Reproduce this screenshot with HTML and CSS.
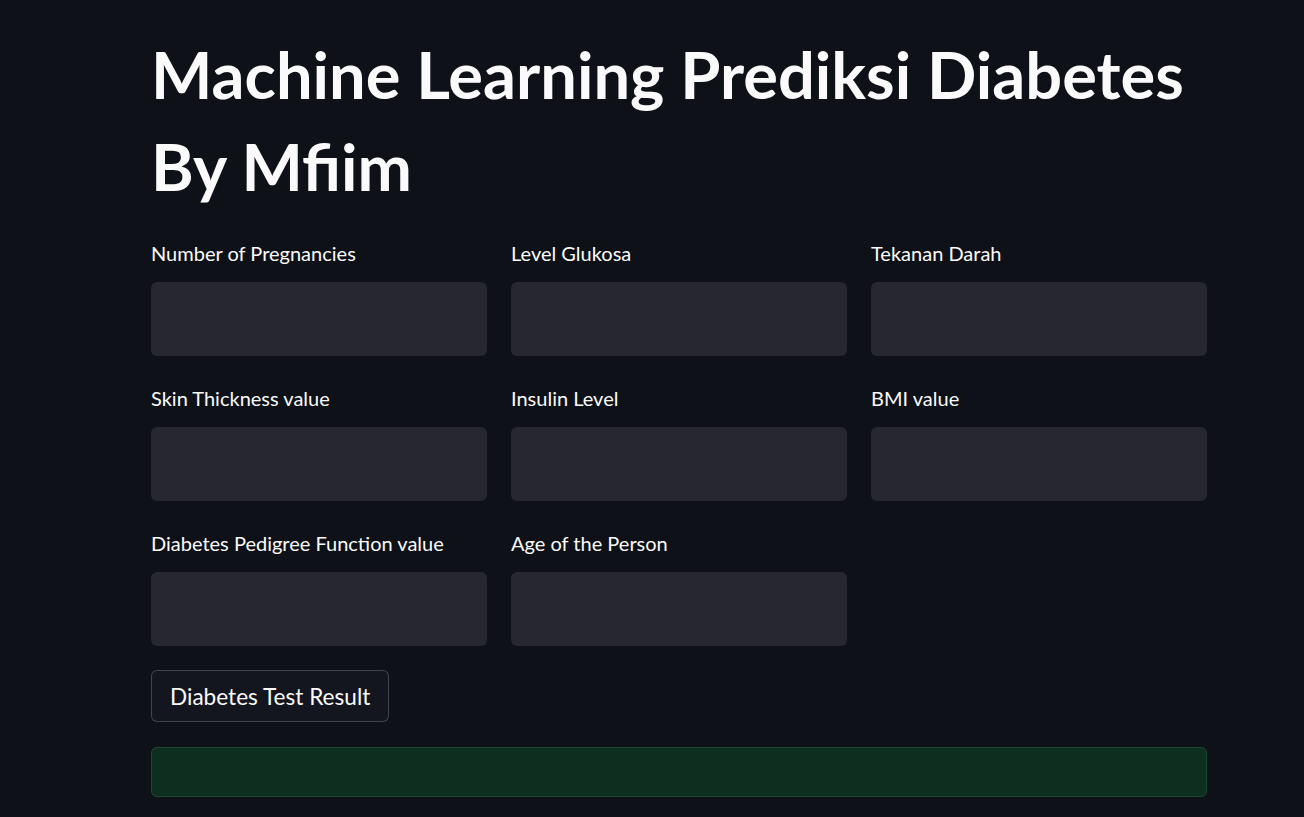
FILE: index.html
```html
<!DOCTYPE html>
<html>
<head>
<meta charset="utf-8">
<link rel="stylesheet" href="styles.css">
</head>
<body>
<main class="main">
  <h1 class="title">Machine Learning Prediksi Diabetes By Mfiim</h1>
  <div class="form-grid">
    <div class="field"><label class="label">Number of Pregnancies</label><div class="input"></div></div>
    <div class="field"><label class="label">Level Glukosa</label><div class="input"></div></div>
    <div class="field"><label class="label">Tekanan Darah</label><div class="input"></div></div>
    <div class="field"><label class="label">Skin Thickness value</label><div class="input"></div></div>
    <div class="field"><label class="label">Insulin Level</label><div class="input"></div></div>
    <div class="field"><label class="label">BMI value</label><div class="input"></div></div>
    <div class="field"><label class="label">Diabetes Pedigree Function value</label><div class="input"></div></div>
    <div class="field"><label class="label">Age of the Person</label><div class="input"></div></div>
  </div>
  <button class="btn">Diabetes Test Result</button>
  <div class="success"></div>
</main>
</body>
</html>
```
FILE: styles.css
```css
html, body {
  margin: 0;
  padding: 0;
  background: #0e1117;
  color: #fafafa;
  font-family: "Source Sans Pro", Lato, "Noto Sans", sans-serif;
}
.main {
  width: 1056px;
  padding: 28px 0 0 151px;
}
.title {
  margin: 0;
  font-size: 65px;
  font-weight: 700;
  line-height: 92px;
  letter-spacing: 0;
  width: 1100px;
}
.form-grid {
  margin-top: 27px;
  display: grid;
  grid-template-columns: repeat(3, 336px);
  column-gap: 24px;
  row-gap: 28px;
}
.field {
  display: flex;
  flex-direction: column;
}
.label {
  font-size: 20px;
  line-height: 28px;
  height: 28px;
  margin-bottom: 15px;
  color: #fafafa;
}
.input {
  height: 74px;
  background: #262730;
  border-radius: 6px;
}
.btn {
  margin-top: 24px;
  display: block;
  height: 52px;
  padding: 0 18px;
  background: #13161e;
  color: #fafafa;
  border: 1px solid rgba(250, 250, 250, 0.2);
  border-radius: 6px;
  font-family: inherit;
  font-size: 22.6px;
}
.success {
  margin-top: 25px;
  height: 48px;
  background: #0e2e1f;
  border: 1px solid #1a4a2e;
  border-radius: 6px;
}
```
